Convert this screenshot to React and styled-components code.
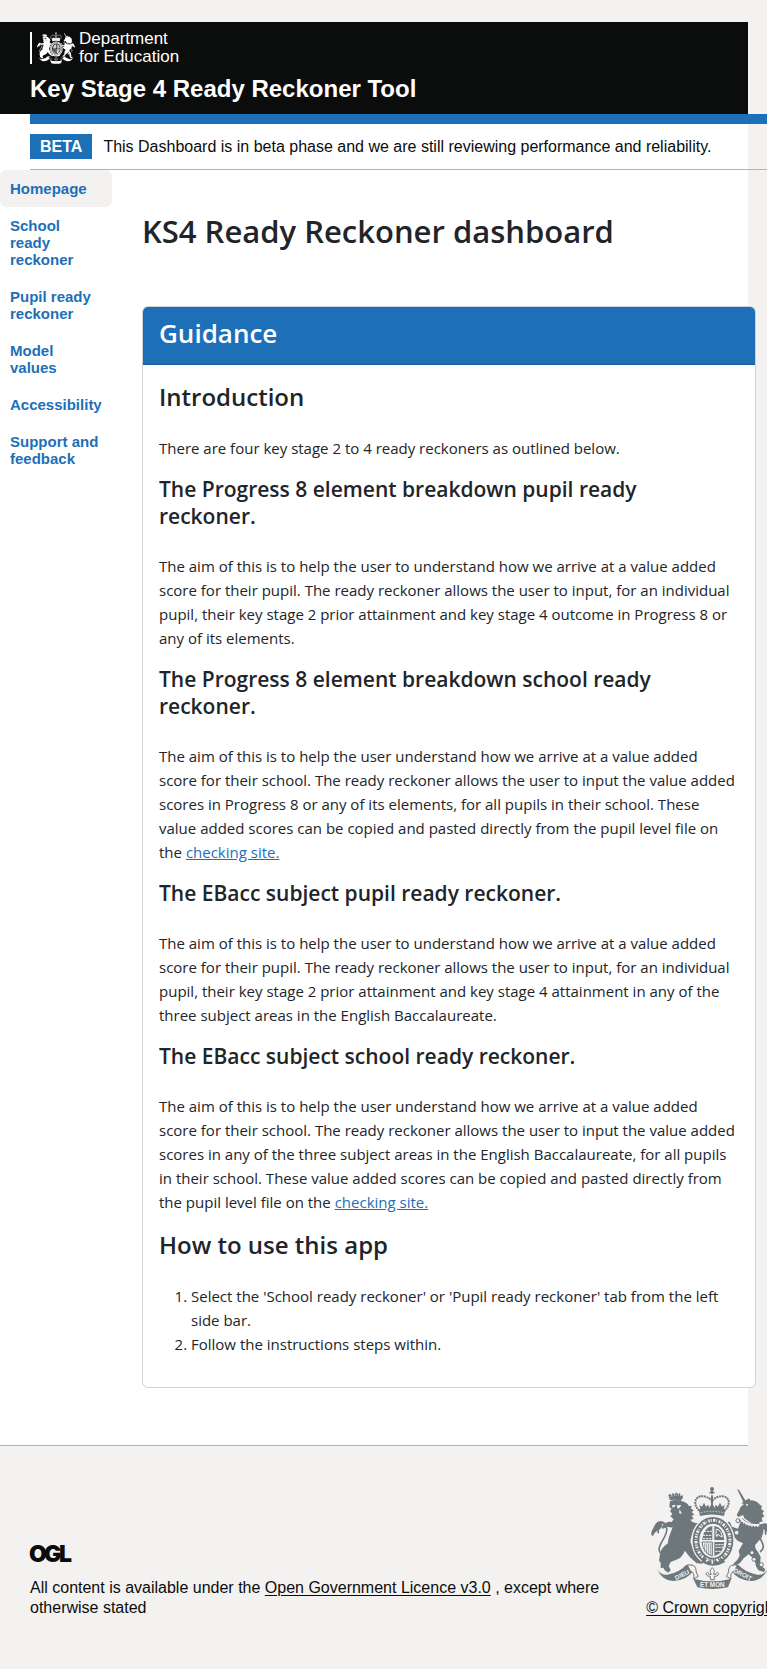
import React from "react";
import styled, { createGlobalStyle } from "styled-components";

const colours = {
  ink: "#0b0c0c",
  body: "#212529",
  blue: "#1d70b8",
  paper: "#f3f2f1",
  rule: "#b1b4b6",
  crest: "#6e787c",
};

const GlobalStyle = createGlobalStyle`
  *, *::before, *::after { box-sizing: border-box; }
  body {
    margin: 0;
    background: ${colours.paper};
    color: ${colours.ink};
    font-family: "Liberation Sans", Arial, sans-serif;
    font-size: 16px;
    line-height: 20px;
  }
  h1, h2, h3, p, ol, ul { margin: 0; padding: 0; }
`;

const Page = styled.div`
  padding-top: 22px;
  overflow-x: clip;
`;

const Shell = styled.div`
  margin-right: 19px;
  background: #fff;
`;

const Header = styled.header`
  display: flex;
  flex-direction: column;
  gap: 10px;
  padding: 10px 30px;
  background: ${colours.ink};
  color: #fff;
`;

const Brand = styled.a`
  display: flex;
  align-items: center;
  gap: 4px;
  height: 32px;
  padding-left: 5px;
  border-left: 2px solid #fff;
  color: #fff;
  text-decoration: none;
  font-size: 17px;
  line-height: 18px;
`;

const ServiceName = styled.div`
  font-size: 24px;
  font-weight: 700;
  line-height: 30px;
`;

const Banner = styled.div`
  display: flex;
  align-items: center;
  gap: 11px;
  margin: 0 -19px 0 30px;
  padding: 10px 0;
  border-top: 10px solid ${colours.blue};
  border-bottom: 1px solid ${colours.rule};
  white-space: nowrap;
`;

const Tag = styled.strong`
  padding: 0 10px;
  background: ${colours.blue};
  color: #fff;
  line-height: 25px;
`;

const Columns = styled.div`
  display: flex;
  align-items: flex-start;
  gap: 30px;
  padding-bottom: 57px;
`;

const Nav = styled.nav`
  flex: 0 0 112px;
`;

const NavLink = styled.a`
  display: block;
  padding: 10px;
  border-radius: 6px;
  background: ${(p) => (p.$active ? colours.paper : "transparent")};
  color: ${colours.blue};
  font-size: 15px;
  font-weight: 700;
  line-height: 17px;
  text-decoration: none;
`;

const Main = styled.main`
  flex: 1;
  min-width: 0;
  margin-right: -8px;
  color: ${colours.body};
  font-family: "Open Sans", "Noto Sans", sans-serif;
  font-size: 15px;
  line-height: 24px;
`;

const PageTitle = styled.h1`
  padding: 41px 0 55px;
  font-size: 31px;
  font-weight: 600;
  line-height: 40px;
`;

const Card = styled.section`
  border: 1px solid #d0d1d2;
  border-radius: 6px;
  background: #fff;
  overflow: hidden;
`;

const CardHeader = styled.div`
  padding: 10px 16px 15px;
  border-bottom: 1px solid #195e9b;
  background: ${colours.blue};
  color: #fff;
`;

const CardTitle = styled.h2`
  font-size: 26px;
  font-weight: 600;
  line-height: 32px;
`;

const CardBody = styled.div`
  display: flex;
  flex-direction: column;
  gap: 16px;
  padding: 17px 16px 31px;
`;

const Heading = styled.h2`
  padding-bottom: 8px;
  font-size: 24px;
  font-weight: 600;
  line-height: 30px;
`;

const SubHeading = styled.h3`
  && { padding: 0 24px 8px 0; }
  font-size: 21px;
  font-weight: 600;
  line-height: 27px;
`;

const TextLink = styled.a`
  color: ${colours.blue};
`;

const Steps = styled.ol`
  && { padding-left: 32px; }
`;

const Footer = styled.footer`
  padding: 40px 11px 50px 30px;
  border-top: 1px solid ${colours.rule};
  background: ${colours.paper};
`;

const FooterRow = styled.div`
  display: flex;
  align-items: flex-end;
  gap: 40px;
  margin-right: -41px;
`;

const Licence = styled.div`
  flex: 1;
  display: flex;
  flex-direction: column;
  gap: 15px;
`;

const InkLink = styled.a`
  color: ${colours.ink};
  text-underline-offset: 2px;
`;

const Copyright = styled.a`
  display: flex;
  flex-direction: column;
  align-items: center;
  gap: 8px;
  color: ${colours.ink};
  text-underline-offset: 2px;
  white-space: nowrap;
`;

const Mark = styled.svg`
  display: block;
  flex: none;
  overflow: visible;
`;

/* Royal coat of arms: `color` is the figure, `ground` the colour behind it. */
function Crest({ width, height, color, ground, motto }) {
  return (
    <Mark width={width} height={height} viewBox="59 48 366 312" preserveAspectRatio="none" aria-hidden="true" fill={color}>
      {/* central crown */}
      <g>
        <circle cx="242" cy="57" r="6" />
        <path d="M239 60h6v12h-6zM234 65h16v5h-16z" />
        <path d="M204 122C178 96 198 72 222 80c10 3 17 8 20 14c3-6 10-11 20-14c24-8 44 16 18 42z" fill="none" stroke={color} strokeWidth="6" strokeDasharray="6 2" />
        <path d="M239 76h6v42h-6z" />
        <path d="M207 118l-3-14 8 6 6-12 6 12 7-6 3 10 8-16 8 16 3-10 7 6 6-12 6 12 8-6-3 14z" />
        <path d="M202 118q40-10 80 0l-4 20q-36-9-72 0z" />
        <path d="M208 128q34-8 68 0" fill="none" stroke={ground} strokeWidth="2" strokeDasharray="5 4" />
      </g>
      {/* lion */}
      <g>
        <path d="M116 91l-5-16 5-4 5 6 3-9 7 6 3-8 6 7 6-4 2 9 6-3 1 8-7 10q-16-6-32-2z" />
        <path d="M117 81q16-9 34-3" fill="none" stroke={ground} strokeWidth="2" strokeDasharray="3 3" />
        <path d="M116 94q17-7 34-1q17 4 22 14l10 2-4 6 9 6-6 5 8 8-8 3 6 10-10 2q8 12 26 10l-2 8q-14 6-16 18l-6 20q-4 8 1 18l22 40 14 10-2 8-18-1-20-18-16-20q-4 15-18 24l-24 10-6 12 6 12-7 8-11-7-4-8-8 1 0-16-5-6 4-25q6-18 22-26q2-18 9-34l6-15q-8 1-16-2l-14 7-3-8 12-10q10-6 18-3l6-8-10-9 6-7-7-9 5-6-7-7z" />
        <path d="M121 107l9-3 3 4-8 5zM136 106l14-1-5 8-6 3z" fill={ground} />
        <path d="M145 118l7 14-9-3z" fill={ground} />
        <path d="M88 250C70 228 112 200 106 174C102 154 78 158 76 168C74 180 84 176 80 190" fill="none" stroke={color} strokeWidth="5" />
        <path d="M104 160q-20-16-33 4l-10 20q-4 12 4 14q6-14 18-18q12-8 8-18z" />
      </g>
      {/* unicorn */}
      <g>
        <path d="M317 57l7 4 21 35-7 4z" />
        <path d="M330 100l16-11 8-4 2 6q20 0 28 12l8 6-3 7 9 8-5 6 6 9-8 5 3 11-9 1-2 9-20-4-24-16-4-10-14 6-5-6 8-15q4-12 14-18z" />
        <circle cx="347" cy="104" r="3" fill={ground} />
        <path d="M332 144q24 22 58 18l4 8q6 14-4 34l-18 20q-3 12 8 22l8 14-2 24 16 14-4 8-17-5-7-12-4-20-18-16q-16 10-26 26l-14 8-6-6q14-10 19-25l-3-14 13-22-16-8-10-10-16-2-9-11 6-14-10-6 2-12 13-2 7 15 18 6z" />
        <path d="M326 146q22 24 58 20" fill="none" stroke={ground} strokeWidth="9" />
        <path d="M324 150q22 24 60 20" fill="none" stroke={color} strokeWidth="5" strokeDasharray="5 4" />
        <circle cx="320" cy="152" r="6" fill="none" stroke={color} strokeWidth="3" />
        <circle cx="316" cy="188" r="7" fill={ground} stroke={color} strokeWidth="3" />
        <circle cx="362" cy="248" r="6" fill={ground} stroke={color} strokeWidth="3" />
        <circle cx="368" cy="268" r="6" fill={ground} stroke={color} strokeWidth="3" />
        <circle cx="390" cy="284" r="6" fill={ground} stroke={color} strokeWidth="3" />
        <path d="M386 246C414 226 372 202 382 178C390 158 408 162 408 172C408 184 398 182 404 194" fill="none" stroke={color} strokeWidth="5" />
        <path d="M384 172q16-24 32-2l8 20q2 10-5 12q-5-14-16-18q-14-8-8-16z" />
      </g>
      {/* garter and shield */}
      <ellipse cx="245" cy="212" rx="65" ry="75" fill={ground} />
      <ellipse cx="245" cy="212" rx="51" ry="61" fill="none" stroke={color} strokeWidth="20" />
      <ellipse cx="245" cy="212" rx="51" ry="61" fill="none" stroke={ground} strokeWidth="9" strokeDasharray="3 4 7 3 2 5 5 3" />
      <g>
        <path d="M212 210h31v-42q-26 4-31 42z" />
        <path d="M249 168v42h30q-3-38-30-42z" />
        <path d="M212 216h31v42q-27-6-31-42z" fill="none" stroke={color} strokeWidth="3" />
        <path d="M220 220v24m6-24v30m6-30v34m6-34v36" stroke={color} strokeWidth="2" />
        <path d="M249 216h30q-3 36-30 42z" />
        <path d="M217 184h25m-28 12h28m-28 10h28M252 232h24m-24 12h20m-20-20h24" stroke={ground} strokeWidth="3" strokeDasharray="7 2" />
        <path d="M255 177l8 3 6 8 4 12-8-2-4-6-5 8-2-9z" fill="none" stroke={ground} strokeWidth="3" />
      </g>
      <path d="M218 262q26 22 54 2l10 12q-36 22-72 0z" />
      <path d="M224 274l8-5M243 281v-8M262 274l-6-5" stroke={ground} strokeWidth="5" />
      {/* scroll */}
      <path d="M76 297q14 20 32 17q38-7 56-29l18-1 4 18q-20 30-62 31q-30-1-48-36z" />
      <path d="M410 297q-14 20-32 17q-38-7-56-29l-18-1-4 18q20 30 62 31q30-1 48-36z" />
      <path d="M168 285q22-2 25 10q1 16 8 24l-14 8q4-20-10-24z" fill={ground} stroke={color} strokeWidth="3" />
      <path d="M318 285q-22-2-25 10q-1 16-8 24l14 8q-4-20 10-24z" fill={ground} stroke={color} strokeWidth="3" />
      <path d="M186 326q56 16 114 0l-10 26q-47 10-92 0z" />
      <path d="M243 293c-8 8-7 14-3 20h-8c-1-7-6-8-8-2c2 7 7 8 13 8v10h12v-10c6 0 11-1 13-8c-2-6-7-5-8 2h-8c4-6 5-12-3-20z" fill="none" stroke={color} strokeWidth="3" />
      {motto && (
        <g fill={ground} fontFamily="Liberation Sans, sans-serif" fontWeight="700" fontSize="19" textAnchor="middle">
          <text x="152" y="321" transform="rotate(-27 152 314)">DIEU</text>
          <text x="243" y="351">ET MON</text>
          <text x="334" y="320" transform="rotate(27 334 314)">DROIT</text>
        </g>
      )}
    </Mark>
  );
}

/* Open Government Licence mark with its overlapping capitals. */
function OglMark() {
  return (
    <Mark width="41" height="18" viewBox="0 0 41 18" role="img" aria-label="OGL" fill={colours.ink}>
      <g fontFamily="Inter, sans-serif" fontWeight="900" fontSize="23">
        <text x="-1" y="17">O</text>
        <text x="14" y="17">G</text>
        <text x="29" y="17">L</text>
      </g>
    </Mark>
  );
}

const navItems = [
  "Homepage",
  "School ready reckoner",
  "Pupil ready reckoner",
  "Model values",
  "Accessibility",
  "Support and feedback",
];

export default function App() {
  return (
    <Page>
      <GlobalStyle />
      <Shell>
        <Header>
          <Brand href="#home">
            <Crest width={38} height={32} color="#fff" ground={colours.ink} />
            <span>
              Department
              <br />
              for Education
            </span>
          </Brand>
          <ServiceName>Key Stage 4 Ready Reckoner Tool</ServiceName>
        </Header>
        <Banner>
          <Tag>BETA</Tag>
          <span>This Dashboard is in beta phase and we are still reviewing performance and reliability.</span>
        </Banner>
        <Columns>
          <Nav aria-label="Sections">
            {navItems.map((label, i) => (
              <NavLink key={label} href={`#section-${i}`} $active={i === 0}>
                {label}
              </NavLink>
            ))}
          </Nav>
          <Main>
            <PageTitle>KS4 Ready Reckoner dashboard</PageTitle>
            <Card>
              <CardHeader>
                <CardTitle>Guidance</CardTitle>
              </CardHeader>
              <CardBody>
                <Heading>Introduction</Heading>
                <p>There are four key stage 2 to 4 ready reckoners as outlined below.</p>
                <SubHeading>The Progress 8 element breakdown pupil ready reckoner.</SubHeading>
                <p>
                  The aim of this is to help the user to understand how we arrive at a value added score for their
                  pupil. The ready reckoner allows the user to input, for an individual pupil, their key stage 2 prior
                  attainment and key stage 4 outcome in Progress 8 or any of its elements.
                </p>
                <SubHeading>The Progress 8 element breakdown school ready reckoner.</SubHeading>
                <p>
                  The aim of this is to help the user understand how we arrive at a value added score for their school.
                  The ready reckoner allows the user to input the value added scores in Progress 8 or any of its
                  elements, for all pupils in their school. These value added scores can be copied and pasted directly
                  from the pupil level file on the <TextLink href="#checking">checking site.</TextLink>
                </p>
                <SubHeading>The EBacc subject pupil ready reckoner.</SubHeading>
                <p>
                  The aim of this is to help the user to understand how we arrive at a value added score for their
                  pupil. The ready reckoner allows the user to input, for an individual pupil, their key stage 2 prior
                  attainment and key stage 4 attainment in any of the three subject areas in the English Baccalaureate.
                </p>
                <SubHeading>The EBacc subject school ready reckoner.</SubHeading>
                <p>
                  The aim of this is to help the user understand how we arrive at a value added score for their school.
                  The ready reckoner allows the user to input the value added scores in any of the three subject areas
                  in the English Baccalaureate, for all pupils in their school. These value added scores can be copied
                  and pasted directly from the pupil level file on the{" "}
                  <TextLink href="#checking">checking site.</TextLink>
                </p>
                <Heading>How to use this app</Heading>
                <Steps>
                  <li>Select the 'School ready reckoner' or 'Pupil ready reckoner' tab from the left side bar.</li>
                  <li>Follow the instructions steps within.</li>
                </Steps>
              </CardBody>
            </Card>
          </Main>
        </Columns>
        <Footer>
          <FooterRow>
            <Licence>
              <OglMark />
              <p>
                All content is available under the <InkLink href="#ogl">Open Government Licence v3.0</InkLink> , except
                where otherwise stated
              </p>
            </Licence>
            <Copyright href="#copyright">
              <Crest width={122} height={104} color={colours.crest} ground={colours.paper} motto />
              <span>© Crown copyright</span>
            </Copyright>
          </FooterRow>
        </Footer>
      </Shell>
    </Page>
  );
}
